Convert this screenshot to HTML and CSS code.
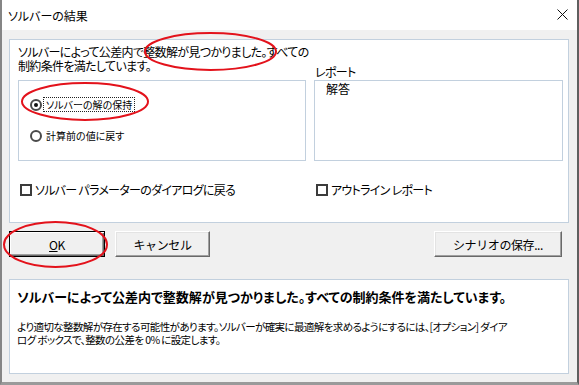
FILE: index.html
```html
<!DOCTYPE html>
<html lang="ja">
<head>
    <meta charset="UTF-8">
    <title>ソルバーの結果</title>
    <link rel="stylesheet" href="styles.css">
</head>
<body>
    <div class="window">
        <div class="titlebar">
            <span class="title">ソルバーの結果</span>
            <svg class="close" width="11" height="11" viewBox="0 0 11 11">
                <path d="M0.5 0.5 L10.5 10.5 M10.5 0.5 L0.5 10.5" stroke="#111" stroke-width="1" fill="none"/>
            </svg>
        </div>

        <div class="content">
            <!-- Result options -->
            <div class="panel top-panel">
                <div class="options">
                    <div class="left-col">
                        <p class="message">ソルバーによって公差内で整数解が見つかりました。すべての<br>制約条件を満たしています。</p>
                        <div class="radio-box">
                            <div class="radio checked"><span class="circle"></span><span class="radio-text focus">ソルバーの解の保持</span></div>
                            <div class="radio"><span class="circle"></span><span class="radio-text">計算前の値に戻す</span></div>
                        </div>
                    </div>
                    <div class="right-col">
                        <div class="report-label">レポート</div>
                        <div class="report-list">
                            <div class="report-item">解答</div>
                        </div>
                    </div>
                    <div class="check"><span class="box"></span>ソルバー パラメーターのダイアログに戻る</div>
                    <div class="check"><span class="box"></span>アウトライン レポート</div>
                </div>
            </div>

            <div class="buttons">
                <button class="btn btn-default" style="width:96px"><u>O</u>K</button>
                <button class="btn" style="width:95px">キャンセル</button>
                <span class="spacer"></span>
                <button class="btn" style="width:128px">シナリオの保存...</button>
            </div>

            <!-- Explanation -->
            <div class="panel bottom-panel">
                <p class="summary">ソルバーによって公差内で整数解が見つかりました。すべての制約条件を満たしています。</p>
                <p class="detail">より適切な整数解が存在する可能性があります。ソルバーが確実に最適解を求めるようにするには、[オプション] ダイア<br>ログ ボックスで、整数の公差を 0% に設定します。</p>
            </div>
        </div>

        <!-- red annotation marks -->
        <svg class="marks" width="579" height="385" viewBox="0 0 579 385">
            <ellipse cx="210.5" cy="51.5" rx="65.5" ry="18.5"/>
            <ellipse cx="85" cy="101.5" rx="63" ry="18.5"/>
            <ellipse cx="55.5" cy="244.5" rx="51.5" ry="22.5"/>
        </svg>
    </div>
</body>
</html>
```

FILE: styles.css
```css
body {
    margin: 0;
    font-family: "Noto Sans CJK JP", "Noto Sans", sans-serif;
    font-feature-settings: "palt";
    color: #000;
    background: #f0f0f0;
}
.window {
    position: relative;
    width: 579px;
    height: 385px;
    box-sizing: border-box;
    background-color: #f0f0f0;
    border-left: 2px solid #858585;
    border-right: 2px solid #5f5f5f;
    border-bottom: 3px solid #9a9a9a;
    overflow: hidden;
}
.titlebar {
    height: 30px;
    background-color: #fff;
    display: flex;
    align-items: center;
    justify-content: space-between;
    padding: 0 9px 0 6px;
}
.title {
    font-size: 12px;
    line-height: 14px;
    margin-top: 1px;
}
.close {
    display: block;
    margin-top: -1px;
}
.content {
    padding: 9px 0 0 7px;
}
.panel {
    width: 560px;
    box-sizing: border-box;
    background-color: #fff;
    border: 1px solid #c2d0de;
}
.top-panel {
    height: 184px;
    padding: 5px 4px 0 8px;
}
.options {
    display: grid;
    grid-template-columns: 288px 249px;
    column-gap: 8px;
    row-gap: 22px;
}
.message {
    margin: 0 0 7px 0;
    font-size: 12px;
    line-height: 14px;
    letter-spacing: -0.65px;
    white-space: nowrap;
}
.radio-box {
    height: 81px;
    box-sizing: border-box;
    border: 1px solid #c2d0de;
    padding: 16px 0 0 11px;
}
.radio {
    display: flex;
    align-items: center;
    height: 15px;
    margin-bottom: 16px;
    font-size: 10px;
}
.circle {
    width: 12px;
    height: 12px;
    box-sizing: border-box;
    border: 2px solid #4a4a4a;
    border-radius: 50%;
    position: relative;
    flex: none;
}
.radio.checked .circle::after {
    content: "";
    position: absolute;
    left: 2px;
    top: 2px;
    width: 4px;
    height: 4px;
    border-radius: 50%;
    background-color: #111;
}
.radio-text {
    margin-left: 1px;
    padding: 0 2px;
    line-height: 13px;
    border: 1px solid transparent;
}
.radio-text.focus {
    border: 1px dotted #222;
}
.right-col {
    display: flex;
    flex-direction: column;
    justify-content: flex-end;
}
.report-label {
    font-size: 12px;
    line-height: 14px;
    margin-left: 1px;
    margin-bottom: 1px;
    letter-spacing: -0.6px;
}
.report-list {
    height: 81px;
    box-sizing: border-box;
    border: 1px solid #c2d0de;
}
.report-item {
    font-size: 12px;
    line-height: 14px;
    padding: 1px 0 0 11px;
}
.check {
    display: flex;
    align-items: center;
    font-size: 12px;
    line-height: 14px;
    padding-left: 2px;
    letter-spacing: -0.7px;
    white-space: nowrap;
}
.box {
    width: 12px;
    height: 12px;
    box-sizing: border-box;
    border: 2px solid #3c3c3c;
    background-color: #fff;
    margin-right: 3px;
    flex: none;
}
.buttons {
    display: flex;
    gap: 10px;
    width: 553px;
    margin-top: 8px;
}
.spacer {
    flex: 1;
}
.btn {
    height: 26px;
    box-sizing: border-box;
    font-family: inherit;
    font-size: 12px;
    padding: 0;
    color: #000;
    letter-spacing: -0.4px;
    background-color: #f0f0f0;
    border: 1px solid;
    border-color: #fff #696969 #696969 #fff;
    box-shadow: inset -1px -1px #a0a0a0, inset 1px 1px #e3e3e3;
}
.btn-default {
    border-color: #000;
    box-shadow: inset 1px 1px #fff, inset -1px -1px #696969, inset -2px -2px #a0a0a0;
}
.bottom-panel {
    height: 95px;
    margin-top: 22px;
    padding: 9px 0 0 7px;
}
.summary {
    margin: 0;
    font-size: 13px;
    font-weight: bold;
    line-height: 15px;
    white-space: nowrap;
}
.detail {
    margin: 16px 0 0 0;
    font-size: 10.5px;
    line-height: 13px;
    letter-spacing: -0.6px;
    white-space: nowrap;
}
.marks {
    position: absolute;
    left: -2px;
    top: 0;
    pointer-events: none;
}
.marks ellipse {
    fill: none;
    stroke: #e3121b;
    stroke-width: 2;
}
```
